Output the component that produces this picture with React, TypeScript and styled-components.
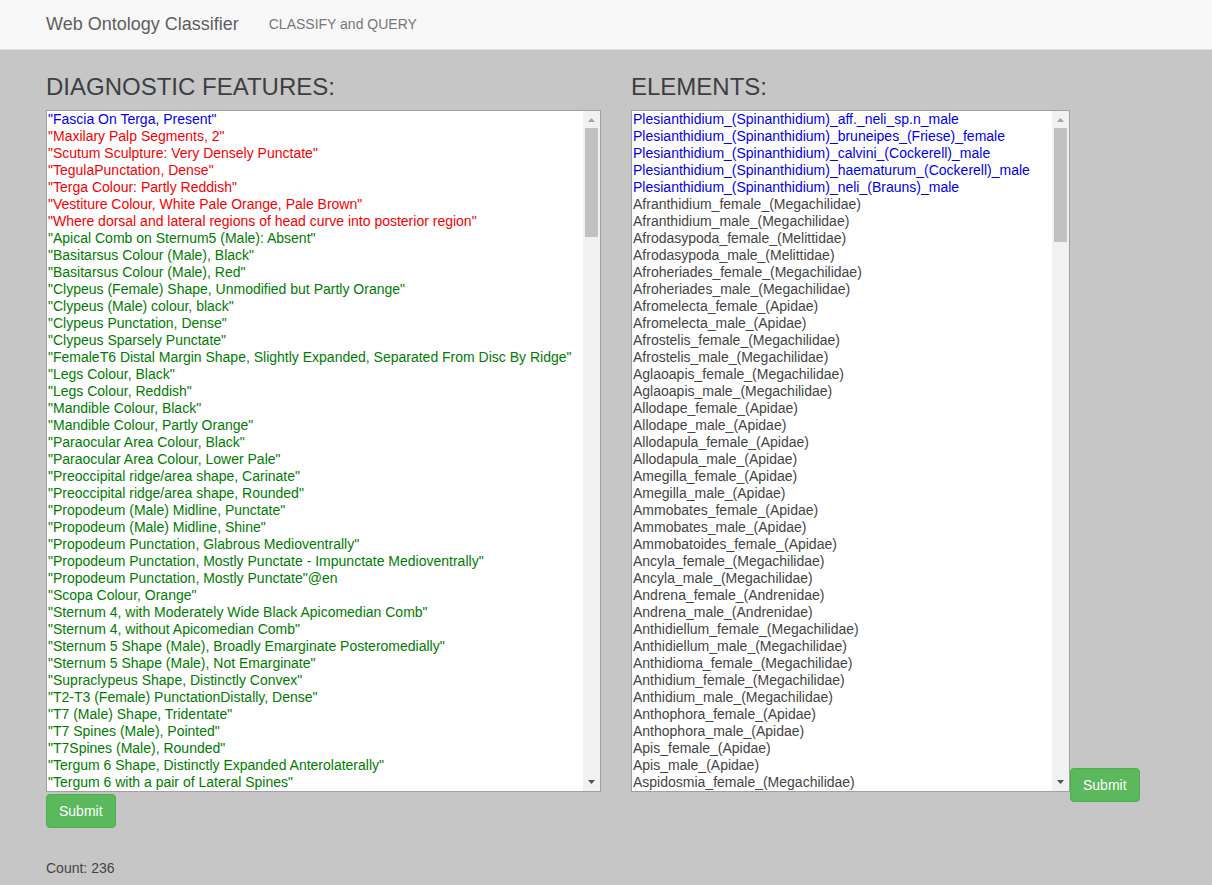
import React from "react";
import styled, { createGlobalStyle } from "styled-components";

const GlobalStyle = createGlobalStyle`
  *, *::before, *::after { box-sizing: border-box; }
  body {
    margin: 0;
    background: #c6c6c6;
    color: #444;
    font-family: "Liberation Sans", Arial, Helvetica, sans-serif;
    font-size: 14px;
    line-height: 20px;
  }
`;

const Navbar = styled.nav`
  display: flex;
  align-items: center;
  gap: 30px;
  height: 50px;
  padding: 0 26px 2px 46px;
  background: #f8f8f8;
  border-bottom: 1px solid #e0e0e0;
`;

const Brand = styled.a`
  color: #5e5e5e;
  font-size: 18px;
  text-decoration: none;
`;

const NavLink = styled.a`
  color: #777;
  text-decoration: none;
`;

const Columns = styled.main`
  display: grid;
  grid-template-columns: 1fr 1fr;
  gap: 30px;
  align-items: start;
  padding: 24px 26px 0 46px;
`;

const Column = styled.form`
  display: flex;
  flex-direction: column;
  align-items: flex-start;
  gap: 2px;
`;

const Title = styled.h3`
  margin: 0 0 8px;
  color: #3c3f41;
  font-size: 24px;
  font-weight: 400;
  line-height: 26px;
`;

const ListLine = styled.div`
  display: flex;
  align-items: flex-end;
  width: 100%;
`;

const ListFrame = styled.div<{ $width: string }>`
  display: flex;
  width: ${(p) => p.$width};
  border: 1px solid #a0a0a0;
  background: #fff;
`;

const List = styled.select`
  flex: 1;
  min-width: 0;
  height: 680px;
  margin: 0;
  padding: 0;
  border: 0;
  border-radius: 0;
  outline: 0;
  overflow: hidden;
  background: #fff;
  color: #444;
  font: inherit;
`;

const Item = styled.option<{ $color: string }>`
  height: 17px;
  min-height: 17px;
  padding: 0 1px 1px;
  color: ${(p) => p.$color};
  line-height: 16px;
`;

const ScrollTrack = styled.div`
  display: flex;
  flex-direction: column;
  align-items: center;
  justify-content: space-between;
  width: 17px;
  background: #f1f1f1;
`;

const ScrollThumb = styled.div<{ $height: number }>`
  width: 13px;
  height: ${(p) => p.$height}px;
  margin-bottom: auto;
  background: #c1c1c1;
`;

const Arrow = styled.svg`
  display: block;
  width: 17px;
  height: 17px;
`;

const SubmitButton = styled.button<{ $beside?: boolean }>`
  height: 34px;
  margin: 0 0 ${(p) => (p.$beside ? "-10px" : "0")};
  padding: 6px 12px;
  border: 1px solid #4cae4c;
  border-radius: 4px;
  background: #5cb85c;
  color: #fff;
  font: inherit;
  cursor: pointer;
`;

const Count = styled.p`
  margin: 28px 0 0;
`;

const BLUE = "#0000f0";
const RED = "#f80000";
const GREEN = "#007c00";
const GREY = "#444";

type Entry = { text: string; color: string };
const tint = (color: string, texts: string[]): Entry[] => texts.map((text) => ({ text, color }));

const features: Entry[] = [
  ...tint(BLUE, ['"Fascia On Terga, Present"']),
  ...tint(RED, [
    '"Maxilary Palp Segments, 2"',
    '"Scutum Sculpture: Very Densely Punctate"',
    '"TegulaPunctation, Dense"',
    '"Terga Colour: Partly Reddish"',
    '"Vestiture Colour, White Pale Orange, Pale Brown"',
    '"Where dorsal and lateral regions of head curve into posterior region"',
  ]),
  ...tint(GREEN, [
    '"Apical Comb on Sternum5 (Male): Absent"',
    '"Basitarsus Colour (Male), Black"',
    '"Basitarsus Colour (Male), Red"',
    '"Clypeus (Female) Shape, Unmodified but Partly Orange"',
    '"Clypeus (Male) colour, black"',
    '"Clypeus Punctation, Dense"',
    '"Clypeus Sparsely Punctate"',
    '"FemaleT6 Distal Margin Shape, Slightly Expanded, Separated From Disc By Ridge"',
    '"Legs Colour, Black"',
    '"Legs Colour, Reddish"',
    '"Mandible Colour, Black"',
    '"Mandible Colour, Partly Orange"',
    '"Paraocular Area Colour, Black"',
    '"Paraocular Area Colour, Lower Pale"',
    '"Preoccipital ridge/area shape, Carinate"',
    '"Preoccipital ridge/area shape, Rounded"',
    '"Propodeum (Male) Midline, Punctate"',
    '"Propodeum (Male) Midline, Shine"',
    '"Propodeum Punctation, Glabrous Medioventrally"',
    '"Propodeum Punctation, Mostly Punctate - Impunctate Medioventrally"',
    '"Propodeum Punctation, Mostly Punctate"@en',
    '"Scopa Colour, Orange"',
    '"Sternum 4, with Moderately Wide Black Apicomedian Comb"',
    '"Sternum 4, without Apicomedian Comb"',
    '"Sternum 5 Shape (Male), Broadly Emarginate Posteromedially"',
    '"Sternum 5 Shape (Male), Not Emarginate"',
    '"Supraclypeus Shape, Distinctly Convex"',
    '"T2-T3 (Female) PunctationDistally, Dense"',
    '"T7 (Male) Shape, Tridentate"',
    '"T7 Spines (Male), Pointed"',
    '"T7Spines (Male), Rounded"',
    '"Tergum 6 Shape, Distinctly Expanded Anterolaterally"',
    '"Tergum 6 with a pair of Lateral Spines"',
  ]),
];

const elements: Entry[] = [
  ...tint(BLUE, [
    "Plesianthidium_(Spinanthidium)_aff._neli_sp.n_male",
    "Plesianthidium_(Spinanthidium)_bruneipes_(Friese)_female",
    "Plesianthidium_(Spinanthidium)_calvini_(Cockerell)_male",
    "Plesianthidium_(Spinanthidium)_haematurum_(Cockerell)_male",
    "Plesianthidium_(Spinanthidium)_neli_(Brauns)_male",
  ]),
  ...tint(GREY, [
    "Afranthidium_female_(Megachilidae)",
    "Afranthidium_male_(Megachilidae)",
    "Afrodasypoda_female_(Melittidae)",
    "Afrodasypoda_male_(Melittidae)",
    "Afroheriades_female_(Megachilidae)",
    "Afroheriades_male_(Megachilidae)",
    "Afromelecta_female_(Apidae)",
    "Afromelecta_male_(Apidae)",
    "Afrostelis_female_(Megachilidae)",
    "Afrostelis_male_(Megachilidae)",
    "Aglaoapis_female_(Megachilidae)",
    "Aglaoapis_male_(Megachilidae)",
    "Allodape_female_(Apidae)",
    "Allodape_male_(Apidae)",
    "Allodapula_female_(Apidae)",
    "Allodapula_male_(Apidae)",
    "Amegilla_female_(Apidae)",
    "Amegilla_male_(Apidae)",
    "Ammobates_female_(Apidae)",
    "Ammobates_male_(Apidae)",
    "Ammobatoides_female_(Apidae)",
    "Ancyla_female_(Megachilidae)",
    "Ancyla_male_(Megachilidae)",
    "Andrena_female_(Andrenidae)",
    "Andrena_male_(Andrenidae)",
    "Anthidiellum_female_(Megachilidae)",
    "Anthidiellum_male_(Megachilidae)",
    "Anthidioma_female_(Megachilidae)",
    "Anthidium_female_(Megachilidae)",
    "Anthidium_male_(Megachilidae)",
    "Anthophora_female_(Apidae)",
    "Anthophora_male_(Apidae)",
    "Apis_female_(Apidae)",
    "Apis_male_(Apidae)",
    "Aspidosmia_female_(Megachilidae)",
  ]),
];

type ListBoxProps = { labelId: string; entries: Entry[]; width: string; thumb: number };

function ListBox({ labelId, entries, width, thumb }: ListBoxProps) {
  return (
    <ListFrame $width={width}>
      <List multiple size={40} aria-labelledby={labelId}>
        {entries.map((e) => (
          <Item key={e.text} $color={e.color}>
            {e.text}
          </Item>
        ))}
      </List>
      <ScrollTrack aria-hidden="true">
        <Arrow viewBox="0 0 17 17">
          <path d="M5 11h7L8.500 7z" fill="#a3a3a3" />
        </Arrow>
        <ScrollThumb $height={thumb} />
        <Arrow viewBox="0 0 17 17">
          <path d="M5 6h7L8.500 10z" fill="#505050" />
        </Arrow>
      </ScrollTrack>
    </ListFrame>
  );
}

const stay = (e: React.FormEvent) => e.preventDefault();

export default function App() {
  return (
    <>
      <GlobalStyle />
      <Navbar>
        <Brand href="#">Web Ontology Classifier</Brand>
        <NavLink href="#classify">CLASSIFY and QUERY</NavLink>
      </Navbar>
      <Columns>
        <Column onSubmit={stay}>
          <Title id="features">DIAGNOSTIC FEATURES:</Title>
          <ListBox labelId="features" entries={features} width="100%" thumb={109} />
          <SubmitButton type="submit">Submit</SubmitButton>
          <Count>Count: 236</Count>
        </Column>
        <Column onSubmit={stay}>
          <Title id="elements">ELEMENTS:</Title>
          <ListLine>
            <ListBox labelId="elements" entries={elements} width="439px" thumb={114} />
            <SubmitButton type="submit" $beside>
              Submit
            </SubmitButton>
          </ListLine>
        </Column>
      </Columns>
    </>
  );
}
